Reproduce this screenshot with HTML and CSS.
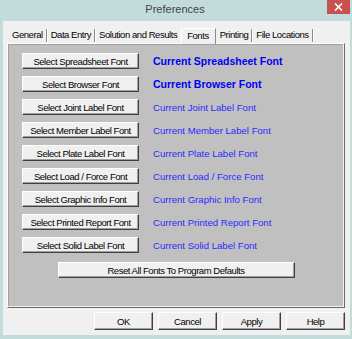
FILE: index.html
```html
<!DOCTYPE html>
<html lang="en">
<head>
    <meta charset="UTF-8">
    <title>Preferences</title>
    <link rel="stylesheet" href="styles.css">
</head>
<body>
    <div class="window">
        <div class="titlebar">
            <span class="title">Preferences</span>
            <span class="close">
                <svg width="9" height="8" viewBox="0 0 9 8"><path d="M1 0.5 L8 7.5 M8 0.5 L1 7.5" stroke="#fff" stroke-width="1.6"/></svg>
            </span>
        </div>
        <div class="client">
            <div class="tabs">
                <span class="tab">General</span>
                <span class="tab">Data Entry</span>
                <span class="tab no-sep">Solution and Results</span>
                <span class="tab active">Fonts</span>
                <span class="tab">Printing</span>
                <span class="tab">File Locations</span>
            </div>
            <div class="page">
                <div class="font-list">
                    <div class="font-row"><button class="btn">Select Spreadsheet Font</button><span class="current bold">Current Spreadsheet Font</span></div>
                    <div class="font-row"><button class="btn">Select Browser Font</button><span class="current bold">Current Browser Font</span></div>
                    <div class="font-row"><button class="btn">Select Joint Label Font</button><span class="current">Current Joint Label Font</span></div>
                    <div class="font-row"><button class="btn">Select Member Label Font</button><span class="current">Current Member Label Font</span></div>
                    <div class="font-row"><button class="btn">Select Plate Label Font</button><span class="current">Current Plate Label Font</span></div>
                    <div class="font-row"><button class="btn">Select Load / Force Font</button><span class="current">Current Load / Force Font</span></div>
                    <div class="font-row"><button class="btn">Select Graphic Info Font</button><span class="current">Current Graphic Info Font</span></div>
                    <div class="font-row"><button class="btn">Select Printed Report Font</button><span class="current">Current Printed Report Font</span></div>
                    <div class="font-row"><button class="btn">Select Solid Label Font</button><span class="current">Current Solid Label Font</span></div>
                </div>
                <button class="btn reset">Reset All Fonts To Program Defaults</button>
            </div>
            <div class="footer">
                <button class="btn dlg">OK</button>
                <button class="btn dlg">Cancel</button>
                <button class="btn dlg">Apply</button>
                <button class="btn dlg">Help</button>
            </div>
        </div>
    </div>
</body>
</html>
```

FILE: styles.css
```css
* {
    box-sizing: border-box;
    margin: 0;
    padding: 0;
}

body {
    background-color: #c2dcdb;
    width: 352px;
    height: 339px;
    overflow: hidden;
    font-family: "Liberation Sans", Arial, sans-serif;
    font-size: 9.5px;
    letter-spacing: -0.45px;
    color: #000;
}

.window {
    display: flex;
    flex-direction: column;
    height: 339px;
}

.titlebar {
    display: flex;
    align-items: flex-start;
    height: 21px;
}

.title {
    flex: 1;
    text-align: center;
    padding-left: 23px;
    padding-top: 3px;
    font-size: 11px;
    letter-spacing: 0;
    color: #444;
}

.close {
    width: 23px;
    height: 14px;
    margin-right: 2px;
    background-color: #c75050;
    display: flex;
    align-items: center;
    justify-content: center;
}

.client {
    background-color: #f0f0f0;
    margin: 0 2px 4px 3px;
    flex: 1;
    display: flex;
    flex-direction: column;
}

/* tab strip */
.tabs {
    display: flex;
    align-items: flex-end;
    height: 22px;
    padding-left: 7px;
}

.tab {
    height: 13px;
    line-height: 12px;
    padding: 0 3px 0 2px;
    margin-bottom: 1px;
    border-right: 1px solid #8c8c8c;
    box-shadow: 1px 0 0 #fff;
    margin-right: 2px;
    white-space: nowrap;
}

.tab.no-sep {
    border-right: none;
    box-shadow: none;
    margin-right: 1px;
}

.tab.active {
    height: 16px;
    line-height: 14px;
    margin-bottom: -1px;
    padding: 0 6px 0 5px;
    border-top: 1px solid #fff;
    border-left: 1px solid #fff;
    border-right: 1px solid #8c8c8c;
    box-shadow: none;
    background-color: #f0f0f0;
    position: relative;
    z-index: 1;
}

/* tab page */
.page {
    margin: 0 5px 0 4px;
    height: 265px;
    border-top: 1px solid #fff;
    border-left: 1px solid #fff;
    border-right: 1px solid #696969;
    border-bottom: 1px solid #696969;
    box-shadow: inset -1px -1px 0 #f0f0f0, inset 1px 1px 0 #a0a0a0;
    background-color: #c0c0c0;
    padding: 9px 14px 0 14px;
    display: flex;
    flex-direction: column;
}

.font-list {
    display: flex;
    flex-direction: column;
    gap: 7px;
}

.font-row {
    display: flex;
    align-items: center;
    gap: 14px;
}

.btn {
    font-family: "Liberation Sans", Arial, sans-serif;
    font-size: 9.5px;
    letter-spacing: -0.45px;
    color: #000;
    background-color: #f0f0f0;
    border-top: 1px solid #fff;
    border-left: 1px solid #fff;
    border-right: 1px solid #404040;
    border-bottom: 1px solid #404040;
    box-shadow: inset -1px -1px 0 #a0a0a0;
    width: 117px;
    height: 16px;
    line-height: 13px;
    white-space: nowrap;
}

.current {
    font-size: 9.6px;
    letter-spacing: 0;
    color: #2b2bff;
    white-space: nowrap;
}

.current.bold {
    font-weight: bold;
    font-size: 10.5px;
    color: #0000f0;
}

.reset {
    width: 237px;
    margin: 9px auto 0 auto;
}

.footer {
    display: flex;
    justify-content: flex-end;
    gap: 5px;
    padding: 4px 5px 0 0;
}

.btn.dlg {
    width: 59px;
    height: 18px;
}
```
